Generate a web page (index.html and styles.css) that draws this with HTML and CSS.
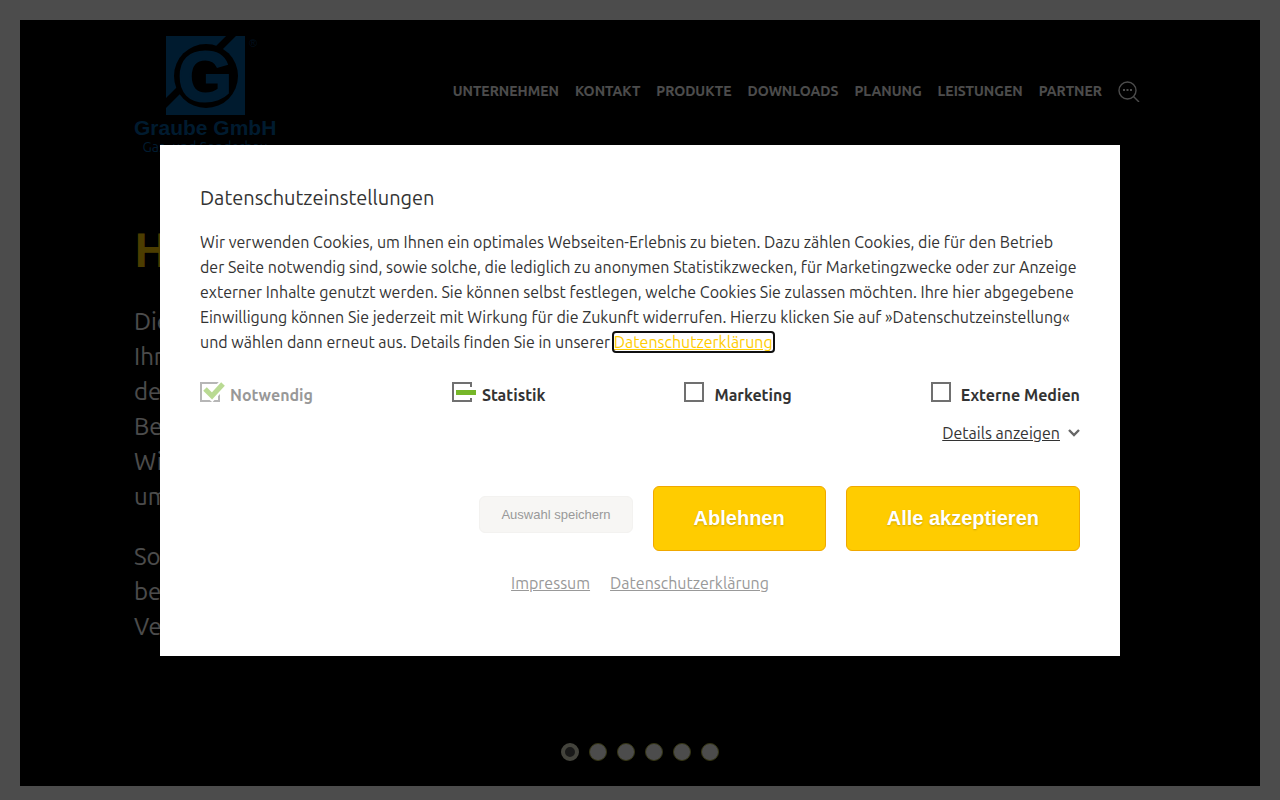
FILE: index.html
```html
<!DOCTYPE html>
<html lang="de">
<head>
    <meta charset="UTF-8">
    <meta name="viewport" content="width=device-width, initial-scale=1.0">
    <title>Graube GmbH</title>
    <link rel="stylesheet" href="styles.css">
</head>
<body>
    <div class="page">
        <header class="header">
            <a class="logo" href="#" aria-label="Graube GmbH">
                <svg class="logo-mark" width="96" height="80" viewBox="0 0 96 80">
                    <rect width="79" height="79" fill="#005a9f"/>
                    <path d="M-3 70L16 51M50 15L69 -4" stroke="#000" stroke-width="7"/>
                    <circle cx="40" cy="40" r="32" fill="#000"/>
                    <text x="39" y="65" text-anchor="middle" font-size="70" font-weight="bold" fill="#005a9f" stroke="#005a9f" stroke-width="2">G</text>
                    <text x="83" y="11" font-size="11" fill="#00345c">®</text>
                </svg>
                <span class="logo-name">Graube GmbH</span>
                <span class="logo-claim">Gas- und Sonderbau</span>
            </a>
            <nav class="nav">
                <a href="#">Unternehmen</a>
                <a href="#">Kontakt</a>
                <a href="#">Produkte</a>
                <a href="#">Downloads</a>
                <a href="#">Planung</a>
                <a href="#">Leistungen</a>
                <a href="#">Partner</a>
                <a class="nav-search" href="#" aria-label="Suche">
                    <svg width="22" height="22" viewBox="0 0 22 22" fill="none" stroke="#fff" stroke-width="1.4">
                        <circle cx="9.5" cy="10.5" r="8.5"/>
                        <path d="M15.5 16.5L21 22"/>
                        <path d="M5 10h2M8.5 10h2M12 10h2" stroke-width="2"/>
                    </svg>
                </a>
            </nav>
        </header>

        <main class="hero">
            <h1>H</h1>
            <p>Die<br>Ihr<br>de<br>Be<br>Wi<br>um</p>
            <p>So<br>be<br>Ve</p>
        </main>

        <div class="dots">
            <button class="dot active" type="button" aria-label="1"></button>
            <button class="dot" type="button" aria-label="2"></button>
            <button class="dot" type="button" aria-label="3"></button>
            <button class="dot" type="button" aria-label="4"></button>
            <button class="dot" type="button" aria-label="5"></button>
            <button class="dot" type="button" aria-label="6"></button>
        </div>
    </div>

    <div class="overlay">
        <div class="modal" role="dialog" aria-labelledby="modal-title">
            <h2 id="modal-title">Datenschutzeinstellungen</h2>
            <p class="modal-text">Wir verwenden Cookies, um Ihnen ein optimales Webseiten-Erlebnis zu bieten. Dazu zählen Cookies, die für den Betrieb der Seite notwendig sind, sowie solche, die lediglich zu anonymen Statistikzwecken, für Marketingzwecke oder zur Anzeige externer Inhalte genutzt werden. Sie können selbst festlegen, welche Cookies Sie zulassen möchten. Ihre hier abgegebene Einwilligung können Sie jederzeit mit Wirkung für die Zukunft widerrufen. Hierzu klicken Sie auf »Datenschutzeinstellung« und wählen dann erneut aus. Details finden Sie in unserer <a class="privacy-link" href="#">Datenschutzerklärung</a></p>

            <div class="options">
                <label class="option disabled" for="necessary">
                    <span class="box">
                        <input type="checkbox" id="necessary" checked disabled>
                        <svg width="26" height="20" viewBox="0 0 26 20" fill="none">
                            <path d="M5 8l7 6L23 2" stroke="#fff" stroke-width="9"/>
                            <path d="M5 7l7 7L23 2" stroke="#76b729" stroke-width="5"/>
                        </svg>
                    </span>
                    Notwendig
                </label>
                <label class="option" for="statistics">
                    <span class="box">
                        <input type="checkbox" id="statistics">
                        <svg width="26" height="20" viewBox="0 0 26 20">
                            <path d="M4 5h20v11H4z" fill="#fff"/>
                            <path d="M4 8h20v5H4z" fill="#76b729"/>
                        </svg>
                    </span>
                    Statistik
                </label>
                <label class="option" for="marketing">
                    <span class="box"><input type="checkbox" id="marketing"></span>
                    Marketing
                </label>
                <label class="option" for="external">
                    <span class="box"><input type="checkbox" id="external"></span>
                    Externe Medien
                </label>
            </div>

            <div class="details">
                <a href="#">Details anzeigen</a>
                <svg width="12" height="8" viewBox="0 0 12 8" fill="none" stroke="#666" stroke-width="2.4">
                    <path d="M1 1l5 5 5-5"/>
                </svg>
            </div>

            <div class="buttons">
                <button class="btn-save" type="button">Auswahl speichern</button>
                <button class="btn" type="button">Ablehnen</button>
                <button class="btn" type="button">Alle akzeptieren</button>
            </div>

            <div class="links">
                <a href="#">Impressum</a>
                <a href="#">Datenschutzerklärung</a>
            </div>
        </div>
    </div>
</body>
</html>
```
FILE: styles.css
```css
* {
    box-sizing: border-box;
}
body {
    margin: 0;
    padding: 20px;
    background: #fff;
    color: #333;
    font-family: Ubuntu, "Open Sans", sans-serif;
    font-size: 16px;
    line-height: 25px;
}
.page {
    background: #000;
    color: #fff;
    padding: 16px 114px 25px;
}
.header {
    display: flex;
    justify-content: space-between;
    align-items: flex-start;
}
.logo {
    display: flex;
    flex-direction: column;
    align-items: center;
    font-family: "Liberation Sans", Arial, sans-serif;
    text-decoration: none;
    color: #005a9f;
}
.logo-mark {
    margin-left: 18px;
}
.logo-name {
    font-size: 21px;
    line-height: 24px;
    font-weight: bold;
}
.logo-claim {
    font-family: Ubuntu, "Open Sans", sans-serif;
    font-size: 14px;
    line-height: 14px;
}
.nav {
    display: flex;
    align-items: center;
    gap: 16px;
    padding: 41px 6px 0 0;
}
.nav a {
    color: #fff;
    font-size: 14px;
    line-height: 28px;
    font-weight: bold;
    text-decoration: none;
    text-transform: uppercase;
}
.nav .nav-search {
    display: flex;
}
.hero h1 {
    margin: 65px 0 25px;
    color: #fc0;
    font-size: 48px;
    line-height: 60px;
}
.hero p {
    margin: 0 0 25px;
    font-size: 24px;
    line-height: 35px;
}
.dots {
    display: flex;
    justify-content: center;
    gap: 10px;
    padding-top: 74px;
}
.dot {
    width: 18px;
    height: 18px;
    padding: 0;
    border: 1px solid #b0b040;
    border-radius: 50%;
    background: #fff;
}
.dot.active {
    border: 4px solid #e0e0c8;
    background: #555;
}
.overlay {
    position: fixed;
    inset: 0;
    display: flex;
    align-items: center;
    justify-content: center;
    background: rgba(0, 0, 0, 0.7);
}
.modal {
    width: 75%;
    padding: 40px 40px 60px;
    background: #fff;
}
.modal h2 {
    margin: 0 0 19px;
    font-size: 20px;
    line-height: 26px;
    font-weight: normal;
}
.modal-text {
    margin: 0 0 27px;
}
.privacy-link {
    color: #fc0;
    outline: 2px solid #101010;
    border-radius: 2px;
}
.options {
    display: flex;
    justify-content: space-between;
}
.option {
    display: flex;
    gap: 10px;
    line-height: 27px;
    font-weight: bold;
}
.option.disabled {
    opacity: 0.5;
}
.box {
    position: relative;
    width: 20px;
    height: 20px;
}
.box input {
    appearance: none;
    display: block;
    width: 20px;
    height: 20px;
    margin: 0;
    border: 2px solid #707070;
}
.box svg {
    position: absolute;
    top: 0;
    left: 0;
}
.details {
    display: flex;
    justify-content: flex-end;
    align-items: center;
    gap: 8px;
    margin: 12px 0 40px;
}
.details a {
    color: #333;
}
.buttons {
    display: flex;
    justify-content: flex-end;
    align-items: center;
    gap: 20px;
    margin-bottom: 20px;
}
.btn,
.btn-save {
    font-family: "Liberation Sans", Arial, sans-serif;
    border-radius: 6px;
}
.btn {
    padding: 20px 40px;
    border: 1px solid #f0a800;
    background: #fc0;
    color: #fff;
    font-size: 20px;
    line-height: 23px;
    font-weight: bold;
    text-shadow: 0 1px 2px rgba(0, 0, 0, 0.2);
}
.btn-save {
    margin-bottom: 8px;
    padding: 10px 21px;
    border: 1px solid #f3f2f0;
    background: #f7f6f4;
    color: #999;
    font-size: 13px;
    line-height: 15px;
}
.links {
    display: flex;
    justify-content: center;
    gap: 20px;
}
.links a {
    color: #999;
}
```
